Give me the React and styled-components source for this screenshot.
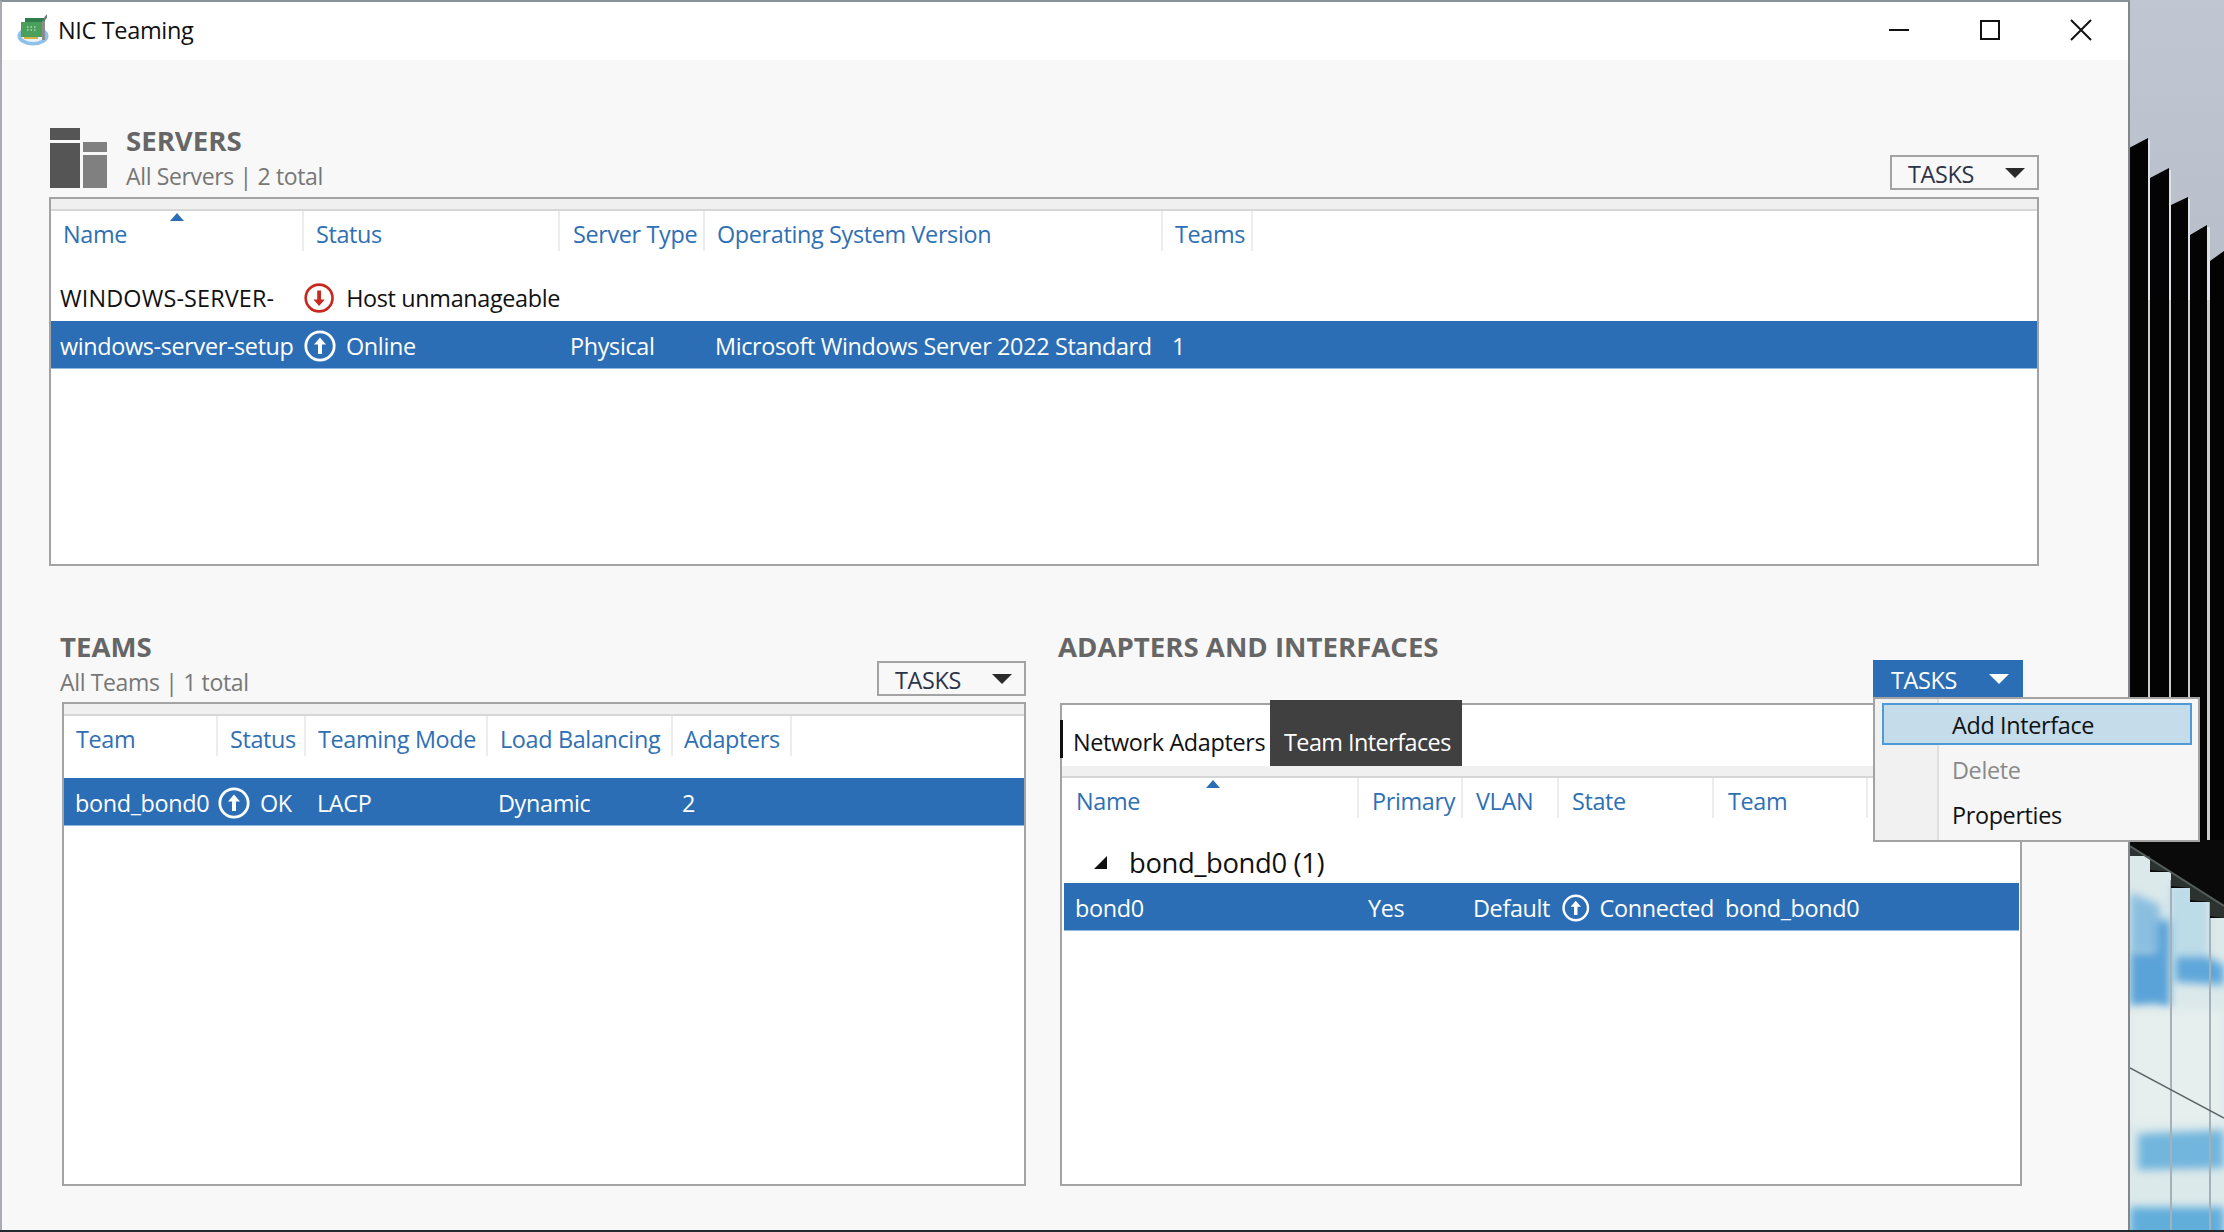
import React from 'react';
import styled, { createGlobalStyle } from 'styled-components';

const GlobalStyle = createGlobalStyle`
  html, body {
    margin: 0;
    padding: 0;
    background: #1f2a33;
  }
  body {
    font-family: "Open Sans", "Noto Sans", "Liberation Sans", sans-serif;
    font-size: 23.4px;
    letter-spacing: -0.35px;
    color: #111;
  }
  * {
    box-sizing: border-box;
  }
`;

const BLUE = '#2b6eb5';

const Desktop = styled.div`
  display: flex;
  width: 2224px;
  height: 1232px;
  overflow: hidden;
`;

const Window = styled.div`
  display: flex;
  flex-direction: column;
  width: 2130px;
  height: 1230px;
  background: #f8f8f8;
  border-top: 2px solid #8b9199;
  border-left: 2px solid #a9adb2;
  border-right: 2px solid #84888c;
`;

const TitleBar = styled.div`
  display: flex;
  align-items: center;
  height: 58px;
  padding: 0 2px 3px 14px;
  background: #fff;
`;

const WindowTitle = styled.span`
  margin-left: 8px;
  font-size: 23.5px;
  color: #111;
`;

const WindowButtons = styled.div`
  display: flex;
  margin-left: auto;
`;

const WindowButton = styled.div`
  display: flex;
  align-items: center;
  justify-content: center;
  width: 91px;
  height: 52px;
`;

const Content = styled.div`
  display: flex;
  flex-direction: column;
  flex: 1;
  padding: 68px 89px 0 47px;
`;

const SectionHead = styled.div`
  display: flex;
  align-items: flex-start;
  height: ${p => p.$height}px;
`;

const HeadText = styled.div`
  display: flex;
  flex-direction: column;
  margin-top: ${p => p.$top}px;
`;

const SectionTitle = styled.h2`
  margin: 0;
  font-size: 27.6px;
  line-height: 28px;
  font-weight: 700;
  letter-spacing: 0;
  color: #666;
`;

const SectionSub = styled.div`
  margin-top: 7px;
  font-size: 23px;
  line-height: 30px;
  color: #777;
`;

const ServerIcon = styled.svg`
  flex: none;
  margin: 0 19px 0 1px;
`;

const TasksWrap = styled.div`
  position: relative;
  margin: ${p => p.$top}px 0 0 auto;
`;

const TasksButton = styled.div`
  display: flex;
  align-items: center;
  width: ${p => p.$width || 149}px;
  height: ${p => (p.$open ? 37 : 35)}px;
  padding: 2px 0 0 16px;
  background: ${p => (p.$open ? BLUE : '#f8f8f8')};
  color: ${p => (p.$open ? '#fff' : '#2c3348')};
  border: 2px solid ${p => (p.$open ? BLUE : '#a3a3a3')};
`;

const Caret = styled.span`
  margin: -2px 12px 0 auto;
  border-style: solid;
  border-width: 10px 10px 0 10px;
  border-color: ${p => (p.$open ? '#fff' : '#2b2b2b')} transparent transparent transparent;
`;

const Panel = styled.div`
  position: relative;
  display: flex;
  flex-direction: column;
  height: ${p => p.$height}px;
  margin-left: ${p => p.$left || 0}px;
  margin-right: ${p => p.$right || 0}px;
  background: #fff;
  border: 2px solid #a3a3a3;
`;

const Strip = styled.div`
  height: ${p => p.$height}px;
  background: #f0f0f0;
  border-bottom: 2px solid #d6d6d6;
`;

const HeaderRow = styled.div`
  display: grid;
  grid-template-columns: ${p => p.$cols};
  height: 40px;
  margin-bottom: ${p => p.$gap}px;
`;

const HeaderCell = styled.div`
  position: relative;
  padding: 8px 0 0 ${p => p.$pad}px;
  line-height: 30px;
  white-space: nowrap;
  color: #2f70b4;
  border-right: 2px solid #ececec;
`;

const SortArrow = styled.span`
  position: absolute;
  top: 2px;
  left: ${p => p.$left}px;
  border-style: solid;
  border-width: 0 7px 8px 7px;
  border-color: transparent transparent ${BLUE} transparent;
`;

const Row = styled.div`
  display: grid;
  grid-template-columns: ${p => p.$cols};
  align-items: center;
  height: 48px;
  margin-left: ${p => p.$insetLeft || 0}px;
  margin-right: ${p => p.$insetRight || 0}px;
  background: ${p => (p.$selected ? BLUE : 'transparent')};
  color: ${p => (p.$selected ? '#fff' : '#111')};
  border-bottom: 1px solid ${p => (p.$selected ? '#8fbbe3' : 'transparent')};
`;

const Cell = styled.div`
  display: flex;
  align-items: center;
  gap: ${p => p.$gap || 0}px;
  padding: 2px 0 0 ${p => p.$pad}px;
  letter-spacing: ${p => p.$tracking ?? -0.35}px;
  white-space: nowrap;
`;

const GroupRow = styled.div`
  display: flex;
  align-items: center;
  gap: 22px;
  height: 41px;
  padding-left: 32px;
  font-size: 27.4px;
  color: #111;
`;

const BottomRow = styled.div`
  display: grid;
  grid-template-columns: 966px 965px;
  gap: 32px;
  margin: 64px -17px 0 11px;
`;

const Column = styled.div`
  display: flex;
  flex-direction: column;
`;

const TabBar = styled.div`
  display: flex;
  height: 61px;
`;

const PlainTab = styled.div`
  width: 210px;
  height: 38px;
  margin: 15px 0 0 -2px;
  padding: 4px 0 0 10px;
  line-height: 36px;
  white-space: nowrap;
  border-left: 3px solid #111;
`;

const ActiveTab = styled.div`
  width: 192px;
  height: 66px;
  margin-top: -5px;
  padding: 24px 0 0 14px;
  line-height: 36px;
  letter-spacing: -0.55px;
  white-space: nowrap;
  color: #fff;
  background: #404040;
`;

const Menu = styled.div`
  position: absolute;
  top: 100%;
  left: 0;
  z-index: 2;
  width: 327px;
  padding: 4px 6px 2px 7px;
  background: linear-gradient(90deg, #f1f1f1 62px, #dfdfdf 62px, #dfdfdf 64px, #f6f6f6 64px);
  border: 2px solid #a3a3a3;
`;

const MenuItem = styled.div`
  height: 42px;
  margin-bottom: 3px;
  padding-left: 68px;
  line-height: 40px;
  color: ${p => (p.$disabled ? '#8a8a8a' : '#111')};
  background: ${p => (p.$active ? '#c5dcea' : 'transparent')};
  border: 2px solid ${p => (p.$active ? '#4d9ad6' : 'transparent')};
`;

const Wallpaper = styled.svg`
  flex: none;
  width: 94px;
  height: 1230px;
`;

function NicIcon() {
  return (
    <svg width="34" height="32" viewBox="0 0 34 32">
      <ellipse cx="17" cy="22" rx="15.5" ry="9.5" fill="#8fc0e8" />
      <ellipse cx="17" cy="21" rx="12" ry="7" fill="#e8f3fb" />
      <rect x="9" y="4" width="20" height="13" fill="#2f7d4a" />
      <rect x="5" y="8" width="21" height="15" fill="#4aa05a" />
      <path d="M11 13 H12.5 M14.5 13 H16 M18 13 H19.5 M11 16 H12.5 M14.5 16 H16 M18 16 H19.5" stroke="#a8dcb2" strokeWidth="1.5" />
      <rect x="8" y="23" width="14" height="2" fill="#d9b13c" />
      <path d="M27 8 L31 4 V0 L28.5 3 Z" fill="#777" />
      <rect x="26" y="7" width="3" height="19" fill="#8c8c8c" />
    </svg>
  );
}

function StatusIcon({ down, light }) {
  const color = down ? '#c9281e' : light ? '#fff' : BLUE;
  return (
    <svg width="32" height="32" viewBox="0 0 32 32">
      <circle cx="16" cy="16" r="14.2" fill="none" stroke={color} strokeWidth="2.8" />
      <g transform={down ? 'rotate(180 16 16)' : undefined}>
        <path d="M16 7.5 L22 14.5 H18 V24 H14 V14.5 H10 Z" fill={color} />
      </g>
    </svg>
  );
}

function TasksMenu({ open, width, children }) {
  return (
    <>
      <TasksButton $open={open} $width={width}>
        TASKS
        <Caret $open={open} />
      </TasksButton>
      {children}
    </>
  );
}

const serverCols = '253px 256px 145px 458px 90px 1fr';
const teamCols = '154px 88px 182px 185px 119px 1fr';
const adapterCols = '297px 104px 96px 155px 154px 1fr';
const adapterRowCols = '295px 104px 96px 155px 154px 1fr';

export default function App() {
  return (
    <Desktop>
      <GlobalStyle />
      <Window>
        <TitleBar>
          <NicIcon />
          <WindowTitle>NIC Teaming</WindowTitle>
          <WindowButtons>
            <WindowButton>
              <svg width="22" height="4" viewBox="0 0 22 4">
                <path d="M1 2 H21" stroke="#111" strokeWidth="2" />
              </svg>
            </WindowButton>
            <WindowButton>
              <svg width="22" height="22" viewBox="0 0 22 22">
                <rect x="2" y="2" width="18" height="18" fill="none" stroke="#111" strokeWidth="2" />
              </svg>
            </WindowButton>
            <WindowButton>
              <svg width="22" height="22" viewBox="0 0 22 22">
                <path d="M1 1 L21 21 M21 1 L1 21" stroke="#111" strokeWidth="2" />
              </svg>
            </WindowButton>
          </WindowButtons>
        </TitleBar>

        <Content>
          <SectionHead $height={69}>
            <ServerIcon width="57" height="60" viewBox="0 0 57 60">
              <rect x="0" y="0" width="30" height="12" fill="#555" />
              <rect x="0" y="15" width="30" height="45" fill="#555" />
              <rect x="33" y="14" width="24" height="10" fill="#808080" />
              <rect x="33" y="27" width="24" height="33" fill="#808080" />
            </ServerIcon>
            <HeadText $top={-2}>
              <SectionTitle>SERVERS</SectionTitle>
              <SectionSub>All Servers | 2 total</SectionSub>
            </HeadText>
            <TasksWrap $top={27}>
              <TasksMenu />
            </TasksWrap>
          </SectionHead>

          <Panel $height={369}>
            <Strip $height={12} />
            <HeaderRow $cols={serverCols} $gap={22}>
              <HeaderCell $pad={12}>
                Name
                <SortArrow $left={119} />
              </HeaderCell>
              <HeaderCell $pad={12}>Status</HeaderCell>
              <HeaderCell $pad={13}>Server Type</HeaderCell>
              <HeaderCell $pad={12}>Operating System Version</HeaderCell>
              <HeaderCell $pad={12}>Teams</HeaderCell>
            </HeaderRow>
            <Row $cols={serverCols}>
              <Cell $pad={9} $tracking={0.15}>WINDOWS-SERVER-</Cell>
              <Cell $pad={0} $gap={12}>
                <StatusIcon down />
                Host unmanageable
              </Cell>
            </Row>
            <Row $cols={serverCols} $selected>
              <Cell $pad={9}>windows-server-setup</Cell>
              <Cell $pad={0} $gap={10}>
                <StatusIcon light />
                Online
              </Cell>
              <Cell $pad={10}>Physical</Cell>
              <Cell $pad={10}>Microsoft Windows Server 2022 Standard</Cell>
              <Cell $pad={9}>1</Cell>
            </Row>
          </Panel>

          <BottomRow>
            <Column>
              <SectionHead $height={72}>
                <HeadText $top={2}>
                  <SectionTitle>TEAMS</SectionTitle>
                  <SectionSub>All Teams | 1 total</SectionSub>
                </HeadText>
                <TasksWrap $top={31}>
                  <TasksMenu />
                </TasksWrap>
              </SectionHead>
              <Panel $height={484} $left={2}>
                <Strip $height={12} />
                <HeaderRow $cols={teamCols} $gap={22}>
                  <HeaderCell $pad={12}>Team</HeaderCell>
                  <HeaderCell $pad={12}>Status</HeaderCell>
                  <HeaderCell $pad={12}>Teaming Mode</HeaderCell>
                  <HeaderCell $pad={12}>Load Balancing</HeaderCell>
                  <HeaderCell $pad={11}>Adapters</HeaderCell>
                </HeaderRow>
                <Row $cols={teamCols} $selected>
                  <Cell $pad={11}>bond_bond0</Cell>
                  <Cell $pad={0} $gap={10}>
                    <StatusIcon light />
                    OK
                  </Cell>
                  <Cell $pad={11}>LACP</Cell>
                  <Cell $pad={10}>Dynamic</Cell>
                  <Cell $pad={9}>2</Cell>
                </Row>
              </Panel>
            </Column>

            <Column>
              <SectionHead $height={73}>
                <HeadText $top={2}>
                  <SectionTitle>ADAPTERS AND INTERFACES</SectionTitle>
                </HeadText>
                <TasksWrap $top={30}>
                  <TasksMenu open width={150}>
                    <Menu>
                      <MenuItem $active>Add Interface</MenuItem>
                      <MenuItem $disabled>Delete</MenuItem>
                      <MenuItem>Properties</MenuItem>
                    </Menu>
                  </TasksMenu>
                </TasksWrap>
              </SectionHead>
              <Panel $height={483} $left={2} $right={1}>
                <TabBar>
                  <PlainTab>Network Adapters</PlainTab>
                  <ActiveTab>Team Interfaces</ActiveTab>
                </TabBar>
                <Strip $height={12} />
                <HeaderRow $cols={adapterCols} $gap={24}>
                  <HeaderCell $pad={14}>
                    Name
                    <SortArrow $left={144} />
                  </HeaderCell>
                  <HeaderCell $pad={13}>Primary</HeaderCell>
                  <HeaderCell $pad={13}>VLAN</HeaderCell>
                  <HeaderCell $pad={13}>State</HeaderCell>
                  <HeaderCell $pad={14}>Team</HeaderCell>
                </HeaderRow>
                <GroupRow>
                  <svg width="13" height="13" viewBox="0 0 13 13">
                    <path d="M13 0 V13 H0 Z" fill="#111" />
                  </svg>
                  bond_bond0 (1)
                </GroupRow>
                <Row $cols={adapterRowCols} $insetLeft={2} $insetRight={1} $selected>
                  <Cell $pad={11}>bond0</Cell>
                  <Cell $pad={9}>Yes</Cell>
                  <Cell $pad={10}>Default</Cell>
                  <Cell $pad={3} $gap={10}>
                    <StatusIcon light />
                    Connected
                  </Cell>
                  <Cell $pad={11}>bond_bond0</Cell>
                </Row>
              </Panel>
            </Column>
          </BottomRow>
        </Content>
      </Window>

      <Wallpaper viewBox="0 0 94 1230" preserveAspectRatio="none">
        <defs>
          <linearGradient id="sky" x1="0" y1="0" x2="0" y2="1">
            <stop offset="0" stopColor="#c1c7d2" />
            <stop offset="1" stopColor="#b7bec9" />
          </linearGradient>
          <filter id="soft" x="-30%" y="-30%" width="160%" height="160%">
            <feGaussianBlur stdDeviation="4" />
          </filter>
        </defs>
        <rect width="94" height="300" fill="url(#sky)" />
        <path d="M18 140 H20 V300 H18 Z M39 170 H41 V300 H39 Z M58 199 H60 V300 H58 Z M77 227 H80 V300 H77 Z" fill="#dde0e4" />
        <rect y="300" width="94" height="560" fill="#c9cbcd" />
        <path d="M-1 148 L18 138 V868 H-1 Z" fill="#030303" />
        <path d="M20 178 L39 168 V868 H20 Z" fill="#030303" />
        <path d="M41 205 L58 197 V868 H41 Z" fill="#030303" />
        <path d="M60 235 L77 225 V868 H60 Z" fill="#030303" />
        <path d="M80 261 L94 251 V868 H80 Z" fill="#030303" />

        <rect y="840" width="94" height="392" fill="#dce9ea" />
        <path d="M40 885 H78 V955 H40 Z" fill="#bcdce8" filter="url(#soft)" />
        <path d="M0 892 L30 905 V952 H0 Z" fill="#8bbfe0" filter="url(#soft)" />
        <path d="M0 952 H26 L26 920 H40 V1008 L26 1004 L0 1006 Z" fill="#5aa3d8" filter="url(#soft)" />
        <path d="M45 956 H76 L94 965 V985 L45 982 Z" fill="#5fa7da" filter="url(#soft)" />
        <path d="M0 1010 H94 V1125 H0 Z" fill="#e6eeee" filter="url(#soft)" />
        <path d="M8 1134 L94 1130 V1168 L8 1170 Z" fill="#72b5dd" filter="url(#soft)" />
        <path d="M0 1207 H94 V1240 H0 Z" fill="#62aedb" filter="url(#soft)" />
        <path d="M41 880 V1232 M80 900 V1232" stroke="#a5b1b8" strokeWidth="2" />
        <path d="M0 1068 L94 1118" stroke="#5c6468" strokeWidth="1.5" />
        <path d="M0 840 H94 V918 H80 V902 H60 V888 H41 V872 H20 V856 H0 Z" fill="#0a0a0a" />
        <path d="M0 856 L20 856 V870 L41 872 V886 L60 888 V900 L80 902 V916 L94 918 V906 L0 846 Z" fill="#2b3230" />
        <path d="M0 846 L94 906" stroke="#555d5a" strokeWidth="2" />
      </Wallpaper>
    </Desktop>
  );
}
